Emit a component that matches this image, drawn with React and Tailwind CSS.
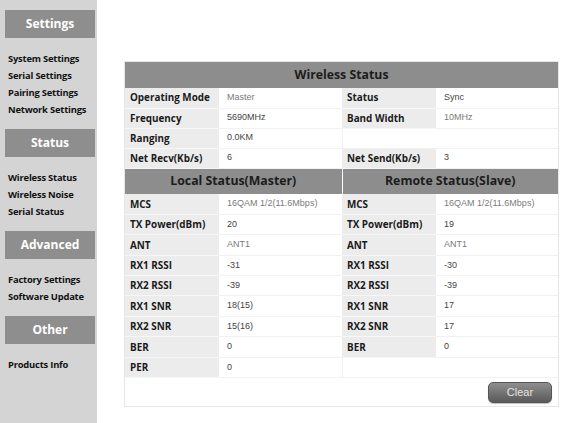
import React from 'react'

const menu = [
  { title: 'Settings', links: ['System Settings', 'Serial Settings', 'Pairing Settings', 'Network Settings'] },
  { title: 'Status', links: ['Wireless Status', 'Wireless Noise', 'Serial Status'] },
  { title: 'Advanced', links: ['Factory Settings', 'Software Update'] },
  { title: 'Other', links: ['Products Info'] },
]

const wireless = [
  ['Operating Mode', 'Master', 'Status', 'Sync'],
  ['Frequency', '5690MHz', 'Band Width', '10MHz'],
  ['Ranging', '0.0KM', null, null],
  ['Net Recv(Kb/s)', '6', 'Net Send(Kb/s)', '3'],
]

const local = [
  ['MCS', '16QAM 1/2(11.6Mbps)', 'MCS', '16QAM 1/2(11.6Mbps)'],
  ['TX Power(dBm)', '20', 'TX Power(dBm)', '19'],
  ['ANT', 'ANT1', 'ANT', 'ANT1'],
  ['RX1 RSSI', '-31', 'RX1 RSSI', '-30'],
  ['RX2 RSSI', '-39', 'RX2 RSSI', '-39'],
  ['RX1 SNR', '18(15)', 'RX1 SNR', '17'],
  ['RX2 SNR', '15(16)', 'RX2 SNR', '17'],
  ['BER', '0', 'BER', '0'],
  ['PER', '0', null, null],
]

const labelFont = { fontFamily: '"Open Sans", "Noto Sans", sans-serif' }
const valueFont = { fontFamily: '"Liberation Sans", Arial, sans-serif' }

// light grey values (mode, bandwidth, antenna, mcs)
const lightValues = ['Master', '10MHz', 'ANT1', '16QAM 1/2(11.6Mbps)']

function Sidebar() {
  return (
    <aside className="w-[97px] shrink-0 bg-[#d4d4d4] pl-[5px] pr-[2px] pt-[10px]" style={labelFont}>
      {menu.map(group => (
        <div key={group.title}>
          <div className="h-[28px] bg-[#8e8e8e] flex items-center justify-center text-white font-bold text-[12px]">
            {group.title}
          </div>
          <ul className="pt-[12px] pb-[11px] pl-[3px]">
            {group.links.map(l => (
              <li key={l} className="h-[17px] leading-[17px] text-[9.4px] tracking-[-0.2px] font-bold text-[#111] whitespace-nowrap">
                {l}
              </li>
            ))}
          </ul>
        </div>
      ))}
    </aside>
  )
}

function Label({ children, h }) {
  return (
    <td className={`${h} bg-[#ececec] border-b border-[#f6f6f6] pl-[5px] text-[9.9px] font-bold text-[#1a1a1a] whitespace-nowrap`} style={labelFont}>
      {children}
    </td>
  )
}

function Value({ children, h }) {
  const light = lightValues.includes(children)
  return (
    <td className={`${h} bg-white border-b border-[#f1f1f1] pl-[8px] text-[9px] whitespace-nowrap ${light ? 'text-[#7a7a7a]' : 'text-[#444]'}`} style={valueFont}>
      {children}
    </td>
  )
}

function Row({ row, h }) {
  const [l1, v1, l2, v2] = row
  return (
    <tr>
      <Label h={h}>{l1}</Label>
      <Value h={h}>{v1}</Value>
      {l2 ? (
        <>
          <Label h={h}>{l2}</Label>
          <Value h={h}>{v2}</Value>
        </>
      ) : (
        <td colSpan={2} className={`${h} bg-white border-b border-l border-[#f1f1f1]`} />
      )}
    </tr>
  )
}

function Heading({ children, colSpan = 4, divider }) {
  return (
    <th
      colSpan={colSpan}
      className={`h-[26px] bg-[#8d8d8d] text-[12.3px] font-bold text-[#1c1c1c] text-center ${divider ? 'border-l border-white' : ''}`}
      style={labelFont}
    >
      {children}
    </th>
  )
}

export default function App() {
  return (
    <div className="flex w-[574px] h-[423px] bg-white overflow-hidden">
      <Sidebar />
      <main className="flex-1 pl-[27px] pt-[61px]">
        <div className="w-[435px] border border-[#e6e6e6]">
          <table className="w-[433px] table-fixed border-collapse">
            <colgroup>
              <col className="w-[94px]" />
              <col className="w-[123px]" />
              <col className="w-[94px]" />
              <col className="w-[122px]" />
            </colgroup>
            <tbody>
              <tr><Heading>Wireless Status</Heading></tr>
              {wireless.map((r, i) => <Row key={i} row={r} h="h-[20px]" />)}
              <tr>
                <Heading colSpan={2}>Local Status(Master)</Heading>
                <Heading colSpan={2} divider>Remote Status(Slave)</Heading>
              </tr>
              {local.map((r, i) => <Row key={i} row={r} h="h-[20.4px]" />)}
            </tbody>
          </table>
          <div className="h-[28px] flex items-center justify-end pr-[6px]">
            <button
              className="w-[64px] h-[21px] rounded-[5px] border border-[#555] bg-gradient-to-b from-[#8f8f8f] to-[#5a5a5a] text-[11px] text-[#e4e4e4] shadow-[0_1px_1px_rgba(0,0,0,0.25)]"
              style={valueFont}
            >
              Clear
            </button>
          </div>
        </div>
      </main>
    </div>
  )
}
